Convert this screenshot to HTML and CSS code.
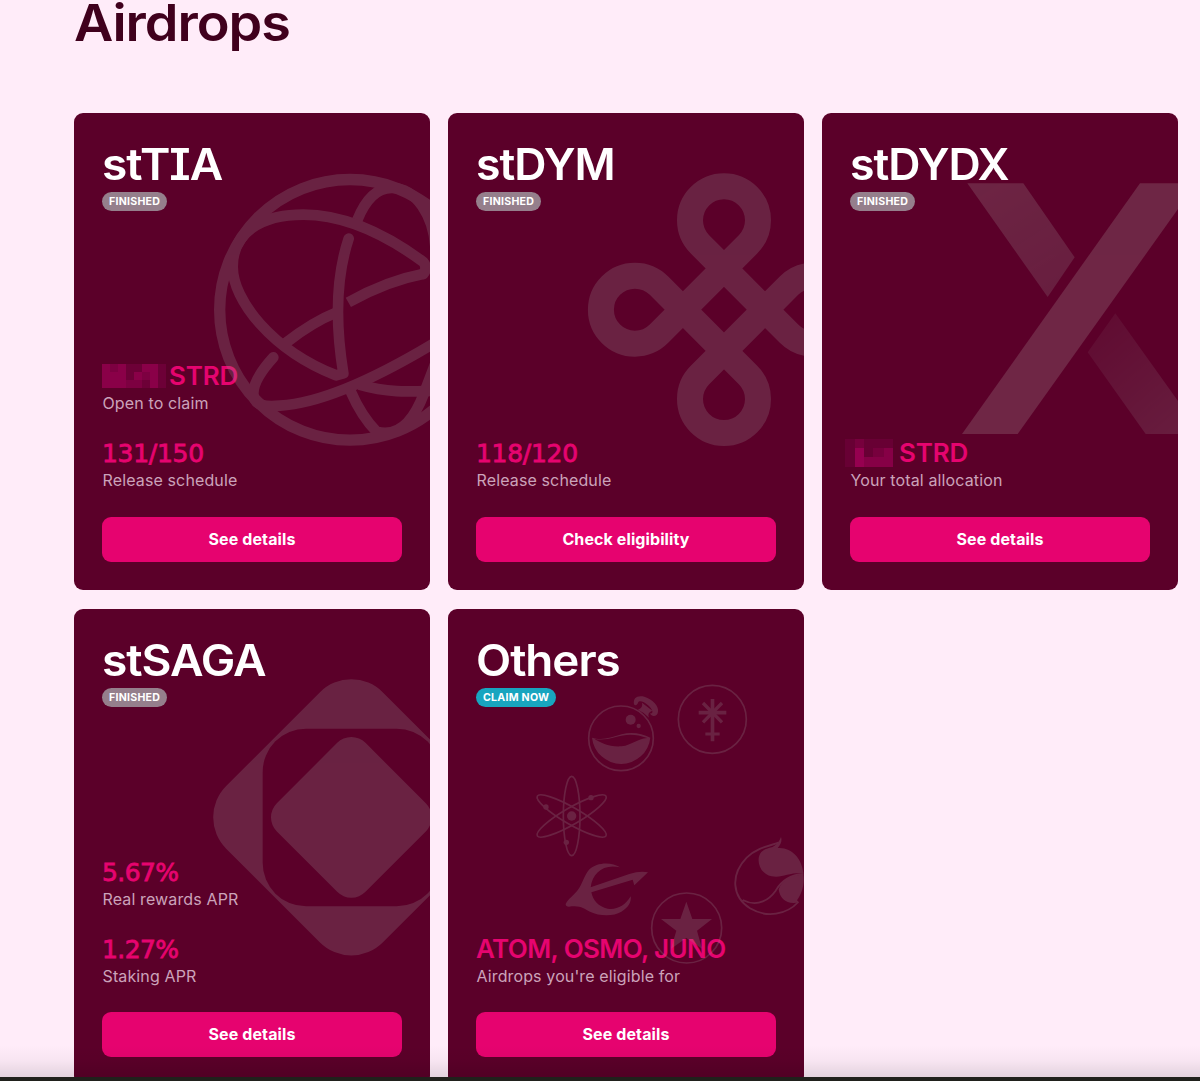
FILE: index.html
```html
<!DOCTYPE html>
<html lang="en">
<head>
    <meta charset="UTF-8">
    <meta name="viewport" content="width=device-width, initial-scale=1.0">
    <title>Airdrops</title>
    <link rel="stylesheet" href="styles.css">
</head>
<body>
    <div class="container">
        <h1 class="page-title">Airdrops</h1>

        <div class="cards">
            <div class="card">
                <h2 class="card-title title-tia">stTIA</h2>
                <span class="badge">FINISHED</span>
                <div class="stats">
                    <div class="stat">
                        <div class="value">
                            <svg class="hidden-amount" width="64" height="24" viewBox="0 0 64 24">
                                <rect width="64" height="24" fill="#6d0037"/>
                                <path fill="#8a0048" d="M0 0h24v24H0zM40 0h16v8H40zM32 8h8v8h-8zM48 8h8v16h-8z"/>
                                <path fill="#7d0041" d="M8 0h8v8H8zM24 16h16v8H24zM40 8h8v8h-8z"/>
                            </svg>
                            <span class="value-text unit">STRD</span>
                        </div>
                        <div class="label">Open to claim</div>
                    </div>
                    <div class="stat">
                        <div class="value"><span class="value-text number">131/150</span></div>
                        <div class="label">Release schedule</div>
                    </div>
                </div>
                <button class="btn">See details</button>
                <svg class="art art-tia" viewBox="0 0 720 900">
                    <g fill="none" stroke="#9b9194" stroke-width="32" stroke-linejoin="round">
                        <circle cx="450" cy="449.500" r="391" stroke-width="34"/>
                        <path d="M670 342Q684 324 670 306C560 225 440 164 310 164C180 164 98 220 98 320C98 420 215 570 408 646L430 640C404 480 408 350 446 236" stroke-linecap="round"/>
                        <path d="M258 548Q340 485 408 458"/>
                        <path d="M445 427Q560 362 672 341"/>
                        <path d="M472 180C500 110 535 84 575 84C650 84 700 170 706 260"/>
                        <path d="M220 592C190 625 160 665 160 700C160 740 200 740 240 737C360 730 520 660 710 545" stroke-linecap="round"/>
                        <path d="M452 694Q485 770 530 815Q620 840 672 700L710 600"/>
                        <path d="M478 674C560 698 620 696 700 692"/>
                    </g>
                </svg>
            </div>

            <div class="card">
                <h2 class="card-title title-dym">stDYM</h2>
                <span class="badge">FINISHED</span>
                <div class="stats">
                    <div class="stat">
                        <div class="value"><span class="value-text number">118/120</span></div>
                        <div class="label">Release schedule</div>
                    </div>
                </div>
                <button class="btn">Check eligibility</button>
                <svg class="art art-dym" viewBox="0 0 750 900">
                    <path fill="none" stroke="#9b9194" stroke-width="78" d="M534 253A102 102 0 1 0 390 253L657 521A102 102 0 1 0 657 377L390 645A102 102 0 1 0 534 645L267 377A102 102 0 1 0 267 521Z"/>
                </svg>
            </div>

            <div class="card">
                <h2 class="card-title title-dydx">stDYDX</h2>
                <span class="badge">FINISHED</span>
                <div class="stats">
                    <div class="stat">
                        <div class="value">
                            <svg class="hidden-amount shifted" width="48" height="28" viewBox="0 0 48 28">
                                <rect width="48" height="28" fill="#680034"/>
                                <path fill="#960050" d="M10 9h9v19h-9z"/>
                                <path fill="#860046" d="M19 18h20v10H19zM39 9h9v19h-9z"/>
                                <path fill="#77003d" d="M10 0h9v9h-9zM28 9h11v9H28z"/>
                            </svg>
                            <span class="value-text unit">STRD</span>
                        </div>
                        <div class="label">Your total allocation</div>
                    </div>
                </div>
                <button class="btn">See details</button>
                <svg class="art art-dydx" viewBox="0 0 780 870">
                    <defs>
                        <linearGradient id="upper" x1="0" y1="0" x2="0.6" y2="1">
                            <stop offset="0" stop-color="#aa9c9e"/>
                            <stop offset="1" stop-color="#9b9194" stop-opacity="0.9"/>
                        </linearGradient>
                        <linearGradient id="lower" x1="0" y1="0" x2="0.8" y2="1">
                            <stop offset="0" stop-color="#9b9194" stop-opacity="0.3"/>
                            <stop offset="1" stop-color="#9b9194" stop-opacity="0.85"/>
                        </linearGradient>
                    </defs>
                    <path fill="url(#upper)" d="M82 70H250L404 292L323 411Z"/>
                    <path fill="#b0a0a0" d="M600 70H769L233 822H66Z"/>
                    <path fill="url(#lower)" d="M526 460L785 822H617L443 577Z"/>
                </svg>
            </div>

            <div class="card">
                <h2 class="card-title title-saga">stSAGA</h2>
                <span class="badge">FINISHED</span>
                <div class="stats">
                    <div class="stat">
                        <div class="value"><span class="value-text percent">5.67%</span></div>
                        <div class="label">Real rewards APR</div>
                    </div>
                    <div class="stat">
                        <div class="value"><span class="value-text percent">1.27%</span></div>
                        <div class="label">Staking APR</div>
                    </div>
                </div>
                <button class="btn">See details</button>
                <svg class="art art-saga" viewBox="0 0 720 930">
                    <mask id="hole">
                        <rect width="720" height="930" fill="#fff"/>
                        <rect x="188" y="206" width="532" height="533" rx="130" fill="#000"/>
                    </mask>
                    <g fill="#9b9194">
                        <g mask="url(#hole)">
                            <rect x="122" y="140" width="664" height="664" rx="133" transform="rotate(45 454 472)"/>
                        </g>
                        <rect x="266" y="284" width="376" height="376" rx="60" transform="rotate(45 454 472)"/>
                    </g>
                </svg>
            </div>

            <div class="card">
                <h2 class="card-title title-others">Others</h2>
                <span class="badge claim">CLAIM NOW</span>
                <div class="stats">
                    <div class="stat">
                        <div class="value"><span class="value-text tokens">ATOM, OSMO, JUNO</span></div>
                        <div class="label">Airdrops you're eligible for</div>
                    </div>
                </div>
                <button class="btn">See details</button>
                <svg class="art art-others" viewBox="0 0 870 960">
                    <!-- flask -->
                    <g fill="#9b9194">
                        <circle cx="303" cy="205" r="97" fill="none" stroke="#9b9194" stroke-width="5"/>
                        <path d="M216 203C245 212 270 204 305 193C335 185 365 190 391 203A88 88 0 0 1 216 203ZM223 206C240 211 258 209 285 202C320 190 350 192 382 204C350 207 337 225 305 229C268 232 242 218 223 206Z" fill-rule="evenodd"/>
                        <circle cx="332" cy="149" r="15"/>
                        <circle cx="356" cy="168" r="6.500"/>
                        <path d="M354 119Q370 113 366 98L397 122Q380 128 387 143Q372 127 354 119Z"/>
                        <path d="M342 103C339 84 351 75 373 80C399 88 417 108 414 125C412 141 395 142 390 130C401 132 400 120 386 107C370 93 357 91 354 98C352 105 346 108 342 103Z"/>
                    </g>
                    <!-- juno -->
                    <g fill="none" stroke="#9b9194">
                        <circle cx="577" cy="148" r="102" stroke-width="5"/>
                        <path d="M577.500 87V214M536 128H619" stroke-width="11"/>
                        <path d="M549 99L606 157M606 99L549 157" stroke-width="10"/>
                        <path d="M556 192H599" stroke-width="9"/>
                    </g>
                    <!-- atom -->
                    <g fill="none" stroke="#9b9194" stroke-width="5">
                        <ellipse cx="155" cy="438" rx="25" ry="119"/>
                        <ellipse cx="155" cy="438" rx="25" ry="119" transform="rotate(60 155 438)"/>
                        <ellipse cx="155" cy="438" rx="25" ry="119" transform="rotate(-60 155 438)"/>
                        <g fill="#9b9194" stroke="none">
                            <circle cx="155" cy="438" r="14"/>
                            <circle cx="213" cy="383" r="8"/>
                            <circle cx="78" cy="411" r="8"/>
                            <circle cx="139" cy="517" r="8"/>
                        </g>
                    </g>
                    <!-- arrow and crescent -->
                    <g fill="#9b9194" transform="translate(0 450)">
                        <path d="M300 142C275 125 230 126 207 149C191 168 186 195 174 209C162 226 145 235 137 252C137 260 144 261 155 259C182 256 192 266 210 275C240 289 280 289 304 275C325 263 335 245 332 229C315 258 290 270 263 266C235 260 219 241 214 217L338 179L343 196L384 157Q360 152 328 162L212 202C217 160 250 130 300 142Z"/>
                    </g>
                    <!-- star -->
                    <g fill="#9b9194" transform="translate(0 450)">
                        <circle cx="500" cy="324" r="105" fill="none" stroke="#9b9194" stroke-width="5"/>
                        <path d="M499 245L517 297H576L531 332L546 386L499 354L453 386L469 332L423 297H481Z"/>
                    </g>
                    <!-- flame -->
                    <g transform="translate(0 450)">
                        <path d="M775 68C735 80 705 88 680 113C630 165 636 230 690 265C740 295 800 284 835 246M668 240C715 264 749 237 767 212C783 184 810 165 850 162" fill="none" stroke="#9b9194" stroke-width="5.500"/>
                        <path fill="#9b9194" d="M783 51C787 63 782 75 773 84C813 80 846 115 850 159C800 158 790 174 755 169C718 162 706 117 724 96C738 83 752 84 758 81Q777 69 783 51ZM850 164C820 166 788 174 776 208C780 238 802 255 837 247L831 241C847 219 854 189 850 164Z"/>
                    </g>
                </svg>
            </div>
        </div>
    </div>
    <div class="dock"></div>
</body>
</html>
```
FILE: styles.css
```css
* {
    margin: 0;
    padding: 0;
    box-sizing: border-box;
}

body {
    font-family: Inter, 'Liberation Sans', sans-serif;
    background: #ffecf9;
    height: 1081px;
    overflow: hidden;
    color: white;
}

.container {
    width: 1104px;
    margin-left: 74px;
}

.page-title {
    height: 113.3px;
    padding-top: 1px;
    font-size: 51px;
    line-height: 44px;
    font-weight: 600;
    letter-spacing: -1px;
    color: #40001d;
    white-space: nowrap;
    transform: scaleX(1.06);
    transform-origin: left;
}

.cards {
    display: grid;
    grid-template-columns: repeat(3, 356px);
    grid-auto-rows: 476.5px;
    gap: 19px 18px;
}

.card {
    position: relative;
    display: flex;
    flex-direction: column;
    align-items: flex-start;
    padding: 28px;
    background: #5b0029;
    border-radius: 9px;
    overflow: hidden;
}

.card-title {
    height: 51px;
    font-size: 43.5px;
    line-height: 47px;
    font-weight: 600;
    letter-spacing: -1px;
    white-space: nowrap;
    transform-origin: left;
}

.title-tia {
    font-feature-settings: 'cv08';
    transform: scaleX(1.06);
}

.title-dym,
.title-dydx {
    transform: scaleX(1.025);
}

.title-saga {
    transform: scaleX(1.062);
}

.title-others {
    transform: scaleX(1.053);
}

.badge {
    height: 19px;
    padding: 0 7px;
    border-radius: 10px;
    background: #957f8c;
    font-size: 10.6px;
    line-height: 19px;
    font-weight: 700;
    letter-spacing: 0.25px;
}

.badge.claim {
    background: #18a5bf;
}

.stats {
    display: flex;
    flex-direction: column;
    gap: 24.7px;
    margin-top: auto;
    margin-bottom: 24.8px;
}

.value {
    display: flex;
    align-items: center;
    height: 29px;
    gap: 3px;
    padding-bottom: 4px;
    font-size: 26px;
    line-height: 25px;
    font-weight: 600;
    color: #e6046f;
}

.value-text {
    white-space: nowrap;
}

.number,
.percent {
    padding-top: 2px;
    font-family: 'DejaVu Sans', sans-serif;
    font-size: 25px;
    font-weight: 400;
    letter-spacing: -0.3px;
    -webkit-text-stroke: 0.8px #e6046f;
}

.percent {
    letter-spacing: -0.6px;
}

.unit {
    letter-spacing: -0.2px;
}

.tokens {
    letter-spacing: -0.6px;
}

.hidden-amount.shifted {
    margin-left: -5px;
    margin-right: 3px;
}

.label {
    height: 23px;
    padding-left: 0.5px;
    font-size: 16px;
    line-height: 23px;
    letter-spacing: 0.13px;
    color: #cba3ba;
}

.btn {
    width: 300px;
    height: 45px;
    padding-bottom: 1px;
    border: none;
    border-radius: 9px;
    background: #e6036f;
    color: white;
    font-family: inherit;
    font-size: 16px;
    font-weight: 700;
    letter-spacing: 0.1px;
}

.art {
    position: absolute;
    opacity: 0.235;
    pointer-events: none;
}

.art-tia {
    left: 126px;
    top: 47px;
    width: 240px;
    height: 300px;
}

.art-dym {
    left: 122px;
    top: 47px;
    width: 250px;
    height: 300px;
}

.art-dydx {
    left: 118px;
    top: 47px;
    width: 260px;
    height: 290px;
}

.art-saga {
    left: 126px;
    top: 51.5px;
    width: 240px;
    height: 310px;
}

.art-others {
    left: 72px;
    top: 61.5px;
    width: 290px;
    height: 320px;
}

/* window edge with its shadow */
.dock {
    position: absolute;
    left: 0;
    right: 0;
    top: 1045px;
    height: 36px;
    background: linear-gradient(rgba(0, 0, 0, 0), rgba(0, 0, 0, 0.03) 16px, rgba(0, 0, 0, 0.11) 32px);
    border-bottom: 4px solid #20211c;
}
```
